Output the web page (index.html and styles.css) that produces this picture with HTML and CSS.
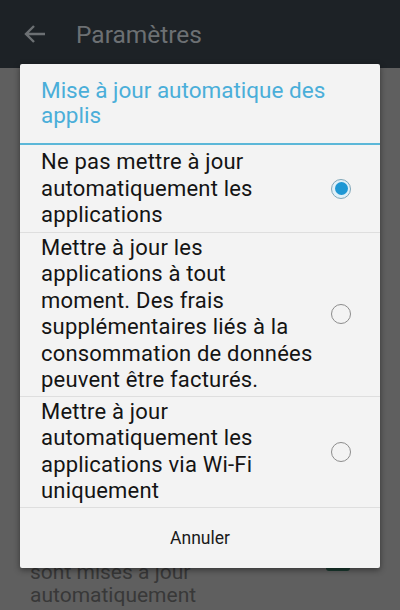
FILE: index.html
```html
<!DOCTYPE html>
<html>
<head>
    <meta charset="UTF-8">
    <title>Paramètres</title>
    <link rel="stylesheet" href="styles.css">
</head>
<body>
    <header class="appbar">
        <svg class="back" width="22" height="20" viewBox="0 0 22 20">
            <path d="M21 10H3M10 2L2 10l8 8" fill="none" stroke="#6c7073" stroke-width="2.4"/>
        </svg>
        <span class="appbar-title">Paramètres</span>
    </header>

    <main class="page">
        <div class="setting">
            <span>sont mises à jour<br>automatiquement</span>
            <span class="toggle"></span>
        </div>
    </main>

    <div class="dialog">
        <h2 class="dialog-title">Mise à jour automatique des applis</h2>

        <label class="option">
            <span class="option-text">Ne pas mettre à jour automatiquement les applications</span>
            <span class="radio checked"></span>
        </label>
        <label class="option">
            <span class="option-text">Mettre à jour les applications à tout moment. Des frais supplémentaires liés à la consommation de données peuvent être facturés.</span>
            <span class="radio"></span>
        </label>
        <label class="option">
            <span class="option-text">Mettre à jour automatiquement les applications via Wi-Fi uniquement</span>
            <span class="radio"></span>
        </label>

        <div class="dialog-actions">
            <button type="button">Annuler</button>
        </div>
    </div>
</body>
</html>
```

FILE: styles.css
```css
body {
    margin: 0;
    height: 610px;
    overflow: hidden;
    display: flex;
    flex-direction: column;
    background: #5f5f5f;
    font-family: Roboto, "Noto Sans", sans-serif;
    position: relative;
}
.appbar {
    height: 68px;
    flex: none;
    display: flex;
    align-items: center;
    background: #1d2226;
    padding-left: 24px;
}
.back {
    margin-right: 30px;
}
.appbar-title {
    font-size: 24.5px;
    color: #6c7073;
}
.page {
    flex: 1;
    display: flex;
    flex-direction: column;
    justify-content: flex-end;
}
.setting {
    display: flex;
    justify-content: space-between;
    padding: 0 50px 3px 30px;
    font-size: 21px;
    line-height: 23px;
    color: #383838;
}
.toggle {
    width: 24px;
    height: 24px;
    margin-top: -14px;
    background: #1b3a30;
    border-radius: 3px;
}
.dialog {
    position: absolute;
    left: 20px;
    top: 64px;
    width: 360px;
    height: 504px;
    background: #f3f3f3;
    border-radius: 2px;
    box-shadow: 0 2px 6px rgba(0, 0, 0, 0.45);
    display: flex;
    flex-direction: column;
}
.dialog-title {
    margin: 0;
    height: 81px;
    box-sizing: border-box;
    padding: 14px 20px 0 21px;
    font-size: 22.5px;
    font-weight: normal;
    line-height: 25px;
    color: #4aaed9;
    border-bottom: 2px solid #5bb7d8;
}
.option {
    display: flex;
    align-items: center;
    padding: 2px 29px 2px 21px;
    border-bottom: 1px solid #dedede;
}
.option-text {
    width: 274px;
    font-size: 22px;
    letter-spacing: 0.2px;
    line-height: 26.5px;
    color: #141414;
}
.option:first-of-type {
    padding-top: 4px;
    padding-bottom: 3px;
}
.radio {
    margin-left: auto;
    width: 18px;
    height: 18px;
    flex: none;
    border: 1.5px solid #8c8c8c;
    border-radius: 50%;
    display: flex;
    align-items: center;
    justify-content: center;
}
.radio.checked {
    border-color: #7fa6b8;
    background: #dff0f8;
}
.radio.checked::after {
    content: "";
    width: 13px;
    height: 13px;
    border-radius: 50%;
    background: #1d97d4;
}
.dialog-actions {
    flex: 1;
    display: flex;
    align-items: center;
    justify-content: center;
}
.dialog-actions button {
    border: none;
    background: none;
    font-family: Roboto, "Noto Sans", sans-serif;
    font-size: 17.5px;
    color: #1a1a1a;
    padding: 0;
}
```
